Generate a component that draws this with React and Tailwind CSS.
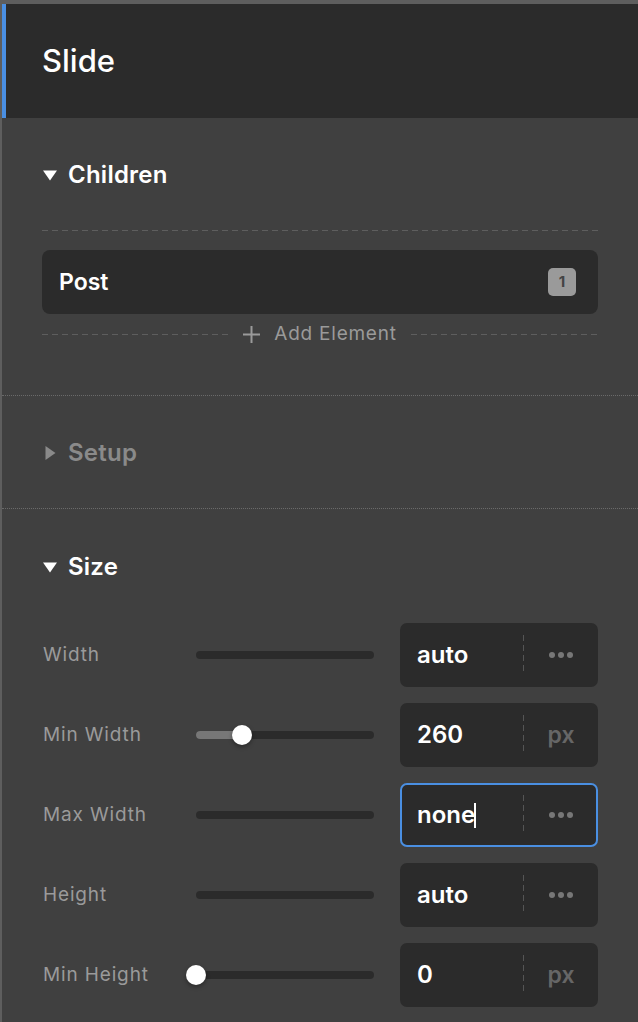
import React from 'react';

const font = { fontFamily: 'Inter, "Noto Sans", sans-serif' };

const Caret = ({ open, muted }) => (
  <svg width="16" height="16" viewBox="0 0 16 16" className="shrink-0">
    {open ? (
      <path d="M1 3.5h14L8 13.5z" fill={muted ? '#8a8a8a' : '#ffffff'} />
    ) : (
      <path d="M3.5 1v14L13.5 8z" fill={muted ? '#8a8a8a' : '#ffffff'} />
    )}
  </svg>
);

const SectionTitle = ({ label, open = true, muted = false }) => (
  <div className="flex items-center gap-[10px] h-[28px]">
    <Caret open={open} muted={muted} />
    <span
      className={`text-[24px] font-semibold tracking-[0.01em] ${muted ? 'text-[#8a8a8a]' : 'text-white'}`}
    >
      {label}
    </span>
  </div>
);

const Dashed = () => (
  <div className="h-px flex-1 bg-[repeating-linear-gradient(90deg,#5e5e5e_0_6px,transparent_6px_10px)]" />
);

const Slider = ({ value }) => (
  <div className="relative w-[178px] h-[8px] rounded-full bg-[#2b2b2b]">
    {value !== undefined && (
      <>
        <div
          className="absolute left-0 top-0 h-full rounded-l-full bg-[#777777]"
          style={{ width: value }}
        />
        <div
          className="absolute top-1/2 w-[20px] h-[20px] -translate-x-1/2 -translate-y-1/2 rounded-full bg-white shadow-[0_2px_4px_rgba(0,0,0,0.35)]"
          style={{ left: value }}
        />
      </>
    )}
  </div>
);

const Dots = () => (
  <div className="flex items-center gap-[3px]">
    <span className="w-[6px] h-[6px] rounded-full bg-[#777777]" />
    <span className="w-[6px] h-[6px] rounded-full bg-[#777777]" />
    <span className="w-[6px] h-[6px] rounded-full bg-[#777777]" />
  </div>
);

const ValueInput = ({ value, unit, focused }) => (
  <div
    className={`flex items-center w-[198px] h-[64px] rounded-[7px] bg-[#2b2b2b] ${
      focused ? 'border-2 border-[#4a8fe2]' : 'border-2 border-transparent'
    }`}
  >
    <div className="flex-1 flex items-center pl-[15px] text-[24px] font-semibold text-white">
      {value}
      {focused && <span className="w-[2px] h-[25px] bg-white -ml-px" />}
    </div>
    <div className="w-px h-[40px] bg-[repeating-linear-gradient(180deg,#555555_0_6px,transparent_6px_10px)]" />
    <div className="w-[72px] pl-[2px] flex items-center justify-center">
      {unit ? (
        <span className="text-[23px] font-semibold text-[#666666]">{unit}</span>
      ) : (
        <Dots />
      )}
    </div>
  </div>
);

const rows = [
  { label: 'Width', value: 'auto' },
  { label: 'Min Width', value: '260', unit: 'px', slider: 46 },
  { label: 'Max Width', value: 'none', focused: true },
  { label: 'Height', value: 'auto' },
  { label: 'Min Height', value: '0', unit: 'px', slider: 0 },
];

export default function App() {
  return (
    <div
      className="w-[638px] h-[1022px] overflow-hidden bg-[#404040] border-t-4 border-l-2 border-[#5e5e5e]"
      style={font}
    >
      {/* Header */}
      <div className="h-[114px] bg-[#2b2b2b] border-l-4 border-[#4a8fe2] flex items-center pl-[36px]">
        <h1 className="text-[31px] font-medium text-white">Slide</h1>
      </div>

      {/* Children */}
      <div className="px-[40px] pt-[43px] pb-[47px] border-b border-dotted border-[#6a6a6a]">
        <SectionTitle label="Children" />
        <div className="mt-[41px] flex">
          <Dashed />
        </div>
        <div className="mt-[19px] h-[64px] rounded-[8px] bg-[#2b2b2b] flex items-center justify-between pl-[17px] pr-[22px]">
          <span className="text-[23px] font-semibold text-white">Post</span>
          <span className="w-[28px] h-[28px] rounded-[5px] bg-[#9a9a9a] flex items-center justify-center text-[15px] font-bold text-[#444444]">
            1
          </span>
        </div>
        <div className="mt-[6px] h-[28px] flex items-center gap-[14px]">
          <Dashed />
          <div className="flex items-center gap-[14px] text-[#9a9a9a]">
            <svg width="17" height="17" viewBox="0 0 17 17">
              <path d="M8.5 0v17M0 8.5h17" stroke="#9a9a9a" strokeWidth="2" />
            </svg>
            <span className="text-[19px] tracking-[0.04em]">Add Element</span>
          </div>
          <Dashed />
        </div>
      </div>

      {/* Setup */}
      <div className="px-[40px] pt-[43px] pb-[41px] border-b border-dotted border-[#6a6a6a]">
        <SectionTitle label="Setup" open={false} muted />
      </div>

      {/* Size */}
      <div className="px-[40px] pt-[44px]">
        <SectionTitle label="Size" />
        <div className="mt-[42px] flex flex-col gap-[16px]">
          {rows.map((r) => (
            <div key={r.label} className="flex items-center h-[64px]">
              <span className="w-[154px] pl-px text-[19px] tracking-[0.045em] text-[#9a9a9a]">
                {r.label}
              </span>
              <Slider value={r.slider} />
              <div className="ml-[26px]">
                <ValueInput value={r.value} unit={r.unit} focused={r.focused} />
              </div>
            </div>
          ))}
        </div>
      </div>
    </div>
  );
}
